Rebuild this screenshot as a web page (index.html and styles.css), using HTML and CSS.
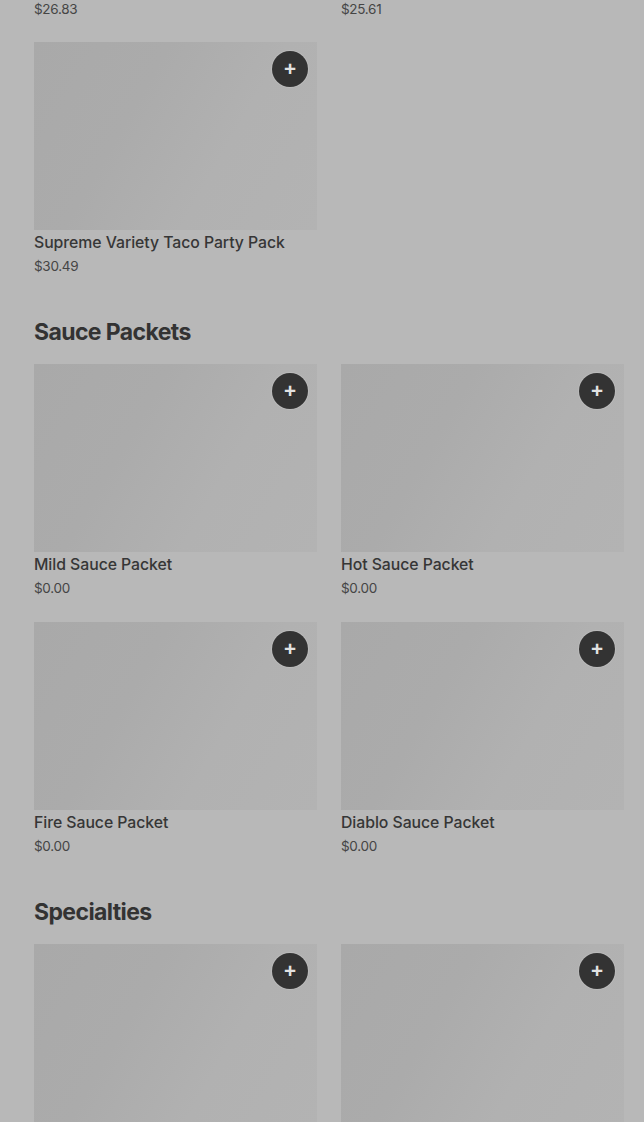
FILE: index.html
```html
<!DOCTYPE html>
<html lang="en">
<head>
    <meta charset="utf-8" />
    <meta name="viewport" content="width=device-width, initial-scale=1" />
    <title>Menu</title>
    <link rel="stylesheet" href="styles.css">
</head>
<body>
    <main class="menu">
        <section class="menu-section first">
            <!-- tail of the row scrolled above -->
            <div class="item-grid price-row">
                <div class="item-price">$26.83</div>
                <div class="item-price">$25.61</div>
            </div>
            <div class="item-grid">
                <div class="item">
                    <div class="item-image"><button class="add-button" aria-label="Add">+</button></div>
                    <div class="item-name">Supreme Variety Taco Party Pack</div>
                    <div class="item-price">$30.49</div>
                </div>
            </div>
        </section>

        <section class="menu-section">
            <h2 class="section-title">Sauce Packets</h2>
            <div class="item-grid">
                <div class="item">
                    <div class="item-image"><button class="add-button" aria-label="Add">+</button></div>
                    <div class="item-name">Mild Sauce Packet</div>
                    <div class="item-price">$0.00</div>
                </div>
                <div class="item">
                    <div class="item-image"><button class="add-button" aria-label="Add">+</button></div>
                    <div class="item-name">Hot Sauce Packet</div>
                    <div class="item-price">$0.00</div>
                </div>
                <div class="item">
                    <div class="item-image"><button class="add-button" aria-label="Add">+</button></div>
                    <div class="item-name">Fire Sauce Packet</div>
                    <div class="item-price">$0.00</div>
                </div>
                <div class="item">
                    <div class="item-image"><button class="add-button" aria-label="Add">+</button></div>
                    <div class="item-name">Diablo Sauce Packet</div>
                    <div class="item-price">$0.00</div>
                </div>
            </div>
        </section>

        <section class="menu-section">
            <h2 class="section-title">Specialties</h2>
            <div class="item-grid">
                <div class="item">
                    <div class="item-image"><button class="add-button" aria-label="Add">+</button></div>
                </div>
                <div class="item">
                    <div class="item-image"><button class="add-button" aria-label="Add">+</button></div>
                </div>
            </div>
        </section>
    </main>
</body>
</html>
```

FILE: styles.css
```css
body {
    margin: 0;
    background: #b8b8b8;
    font-family: Inter, 'Noto Sans', sans-serif;
    color: #363636;
    overflow: hidden;
}

.menu {
    padding: 0 20px 0 34px;
}

.menu-section {
    margin-top: 40px;
}

.menu-section.first {
    margin-top: 0;
}

.section-title {
    margin: 0 0 16px;
    font-size: 23px;
    line-height: 32px;
    font-weight: 700;
    letter-spacing: -0.6px;
    color: #333;
}

.item-grid {
    display: grid;
    grid-template-columns: repeat(2, 283px);
    column-gap: 24px;
    row-gap: 24px;
}

.price-row {
    margin-bottom: 24px;
}

.price-row .item-price {
    margin-top: 0;
}

.item {
    height: 234px;
}

.item-image {
    position: relative;
    height: 188px;
    background: linear-gradient(120deg, #a9a9a9 0%, #ababab 35%, #b1b1b1 65%, #b3b3b3 100%);
}

.add-button {
    position: absolute;
    top: 9px;
    right: 9px;
    width: 36px;
    height: 36px;
    border: none;
    border-radius: 50%;
    background: #333;
    color: #e2e2e2;
    padding: 0 0 2px;
    font-family: Inter, sans-serif;
    font-size: 21px;
    font-weight: 600;
    line-height: 34px;
    box-shadow: 0 0 0 1px rgba(255, 255, 255, 0.12);
}

.item-name {
    margin-top: 3px;
    font-size: 15.8px;
    line-height: 20px;
    font-weight: 500;
    letter-spacing: -0.05px;
    color: #363636;
}

.item-price {
    margin-top: 4px;
    font-size: 13.5px;
    line-height: 18px;
    letter-spacing: -0.3px;
    color: #454545;
}
```
